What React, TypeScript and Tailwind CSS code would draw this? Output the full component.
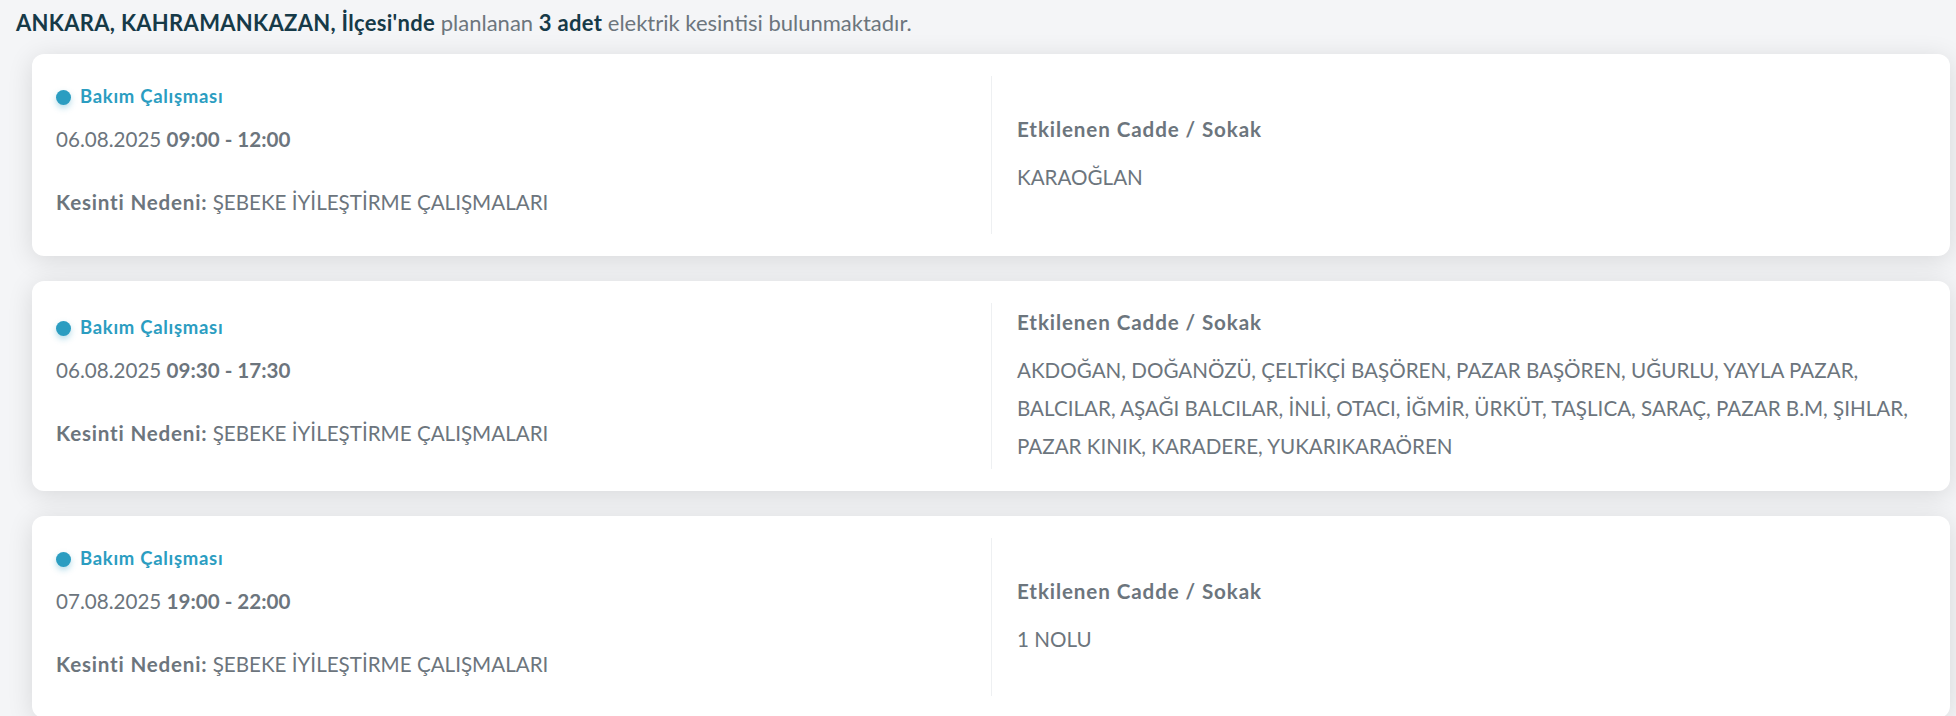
const outages = [
  {
    date: "06.08.2025",
    time: "09:00 - 12:00",
    reason: "ŞEBEKE İYİLEŞTİRME ÇALIŞMALARI",
    streets: "KARAOĞLAN",
  },
  {
    date: "06.08.2025",
    time: "09:30 - 17:30",
    reason: "ŞEBEKE İYİLEŞTİRME ÇALIŞMALARI",
    streets:
      "AKDOĞAN, DOĞANÖZÜ, ÇELTİKÇİ BAŞÖREN, PAZAR BAŞÖREN, UĞURLU, YAYLA PAZAR, BALCILAR, AŞAĞI BALCILAR, İNLİ, OTACI, İĞMİR, ÜRKÜT, TAŞLICA, SARAÇ, PAZAR B.M, ŞIHLAR, PAZAR KINIK, KARADERE, YUKARIKARAÖREN",
  },
  {
    date: "07.08.2025",
    time: "19:00 - 22:00",
    reason: "ŞEBEKE İYİLEŞTİRME ÇALIŞMALARI",
    streets: "1 NOLU",
  },
];

function OutageCard({ o }: { o: (typeof outages)[number] }) {
  return (
    <div className="grid grid-cols-2 rounded-[12px] bg-white px-6 py-[22px] shadow-[0_4px_26px_rgba(0,0,0,0.12)]">
      <div className="flex flex-col justify-center pt-2 pb-[17px]">
        <div className="flex h-[26px] items-center gap-[9px]">
          <span className="h-[15px] w-[15px] rounded-full bg-[#2b9dc1] shadow-[0_3px_6px_rgba(42,155,191,0.35)]" />
          <span className="text-[18.5px] font-bold tracking-[0.7px] text-[#2b9dc1]">Bakım Çalışması</span>
        </div>
        <div className="mt-[14px] text-[20.6px] leading-[30px] text-[#6c757d]">
          {o.date} <span className="font-bold">{o.time}</span>
        </div>
        <div className="mt-[33px] text-[20.6px] leading-[30px] text-[#6c757d]">
          <span className="font-bold tracking-[0.8px]">Kesinti Nedeni:</span> {o.reason}
        </div>
      </div>
      <div className="flex flex-col justify-center border-l border-[#eef0f2] py-1 pl-[25px]">
        <div className="text-[20.6px] font-bold leading-[30px] tracking-[0.9px] text-[#6c757d]">
          Etkilenen Cadde / Sokak
        </div>
        <div className="mt-[14px] text-[20.6px] leading-[38px] text-[#6c757d]">{o.streets}</div>
      </div>
    </div>
  );
}

export default function App() {
  return (
    <div className="min-h-screen bg-[#f4f5f7] pt-2 pr-[6px] pl-4 font-['Lato',sans-serif]">
      <div className="mb-4 text-[22px] leading-[30px] text-[#6c757d]">
        <span className="font-bold tracking-[0.3px] text-[#163a48]">ANKARA, KAHRAMANKAZAN, İlçesi'nde</span>{" "}
        planlanan <span className="font-bold tracking-[0.3px] text-[#163a48]">3 adet</span> elektrik kesintisi
        bulunmaktadır.
      </div>
      <div className="ml-4 flex flex-col gap-[25px]">
        {outages.map((o, i) => (
          <OutageCard key={i} o={o} />
        ))}
      </div>
    </div>
  );
}
